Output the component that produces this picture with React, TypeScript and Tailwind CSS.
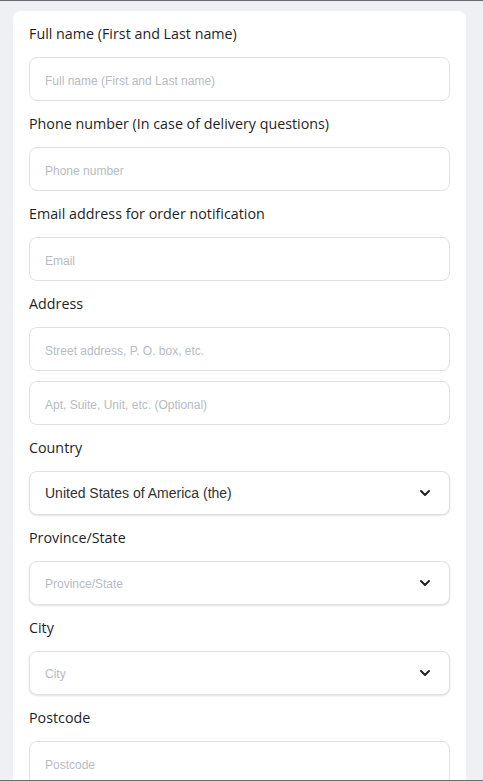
import { ChevronDown } from "lucide-react";

const label = "block h-[22px] leading-[22px] mb-3 text-[14.3px] text-[#1f1f1f] [font-family:'Open_Sans',sans-serif]";
const box =
  "flex h-[44px] w-full items-center rounded-lg border border-[#dfe1e5] bg-white px-[15px] text-[12px] [font-family:'Liberation_Sans',Arial,sans-serif]";

function TextField({ placeholder }: { placeholder: string }) {
  return (
    <div className={box}>
      <span className="pt-[4px] text-[#b7bbc2]">{placeholder}</span>
    </div>
  );
}

function SelectField({ value, placeholder }: { value?: string; placeholder: string }) {
  return (
    <div className={`${box} justify-between shadow-[0_1px_2px_rgba(0,0,0,0.12)]`}>
      {value ? (
        <span className="text-[14px] text-[#303133]">{value}</span>
      ) : (
        <span className="pt-[2px] text-[#b7bbc2]">{placeholder}</span>
      )}
      <ChevronDown className="mr-[1px] h-4 w-4 text-[#222]" strokeWidth={3} />
    </div>
  );
}

function Field({ title, children }: { title: string; children: React.ReactNode }) {
  return (
    <div className="mb-3">
      <div className={label}>{title}</div>
      {children}
    </div>
  );
}

export default function App() {
  return (
    <div className="h-[781px] overflow-hidden border-y border-[#6b6b6b] bg-[#eff0f3] pl-[13px] pr-[17px] pt-[10px]">
      <div className="rounded-lg bg-white px-4 pt-3">
        <Field title="Full name (First and Last name)">
          <TextField placeholder="Full name (First and Last name)" />
        </Field>
        <Field title="Phone number (In case of delivery questions)">
          <TextField placeholder="Phone number" />
        </Field>
        <Field title="Email address for order notification">
          <TextField placeholder="Email" />
        </Field>
        <Field title="Address">
          <div className="flex flex-col gap-[10px]">
            <TextField placeholder="Street address, P. O. box, etc." />
            <TextField placeholder="Apt, Suite, Unit, etc. (Optional)" />
          </div>
        </Field>
        <Field title="Country">
          <SelectField value="United States of America (the)" placeholder="Country" />
        </Field>
        <Field title="Province/State">
          <SelectField placeholder="Province/State" />
        </Field>
        <Field title="City">
          <SelectField placeholder="City" />
        </Field>
        <Field title="Postcode">
          <TextField placeholder="Postcode" />
        </Field>
      </div>
    </div>
  );
}
